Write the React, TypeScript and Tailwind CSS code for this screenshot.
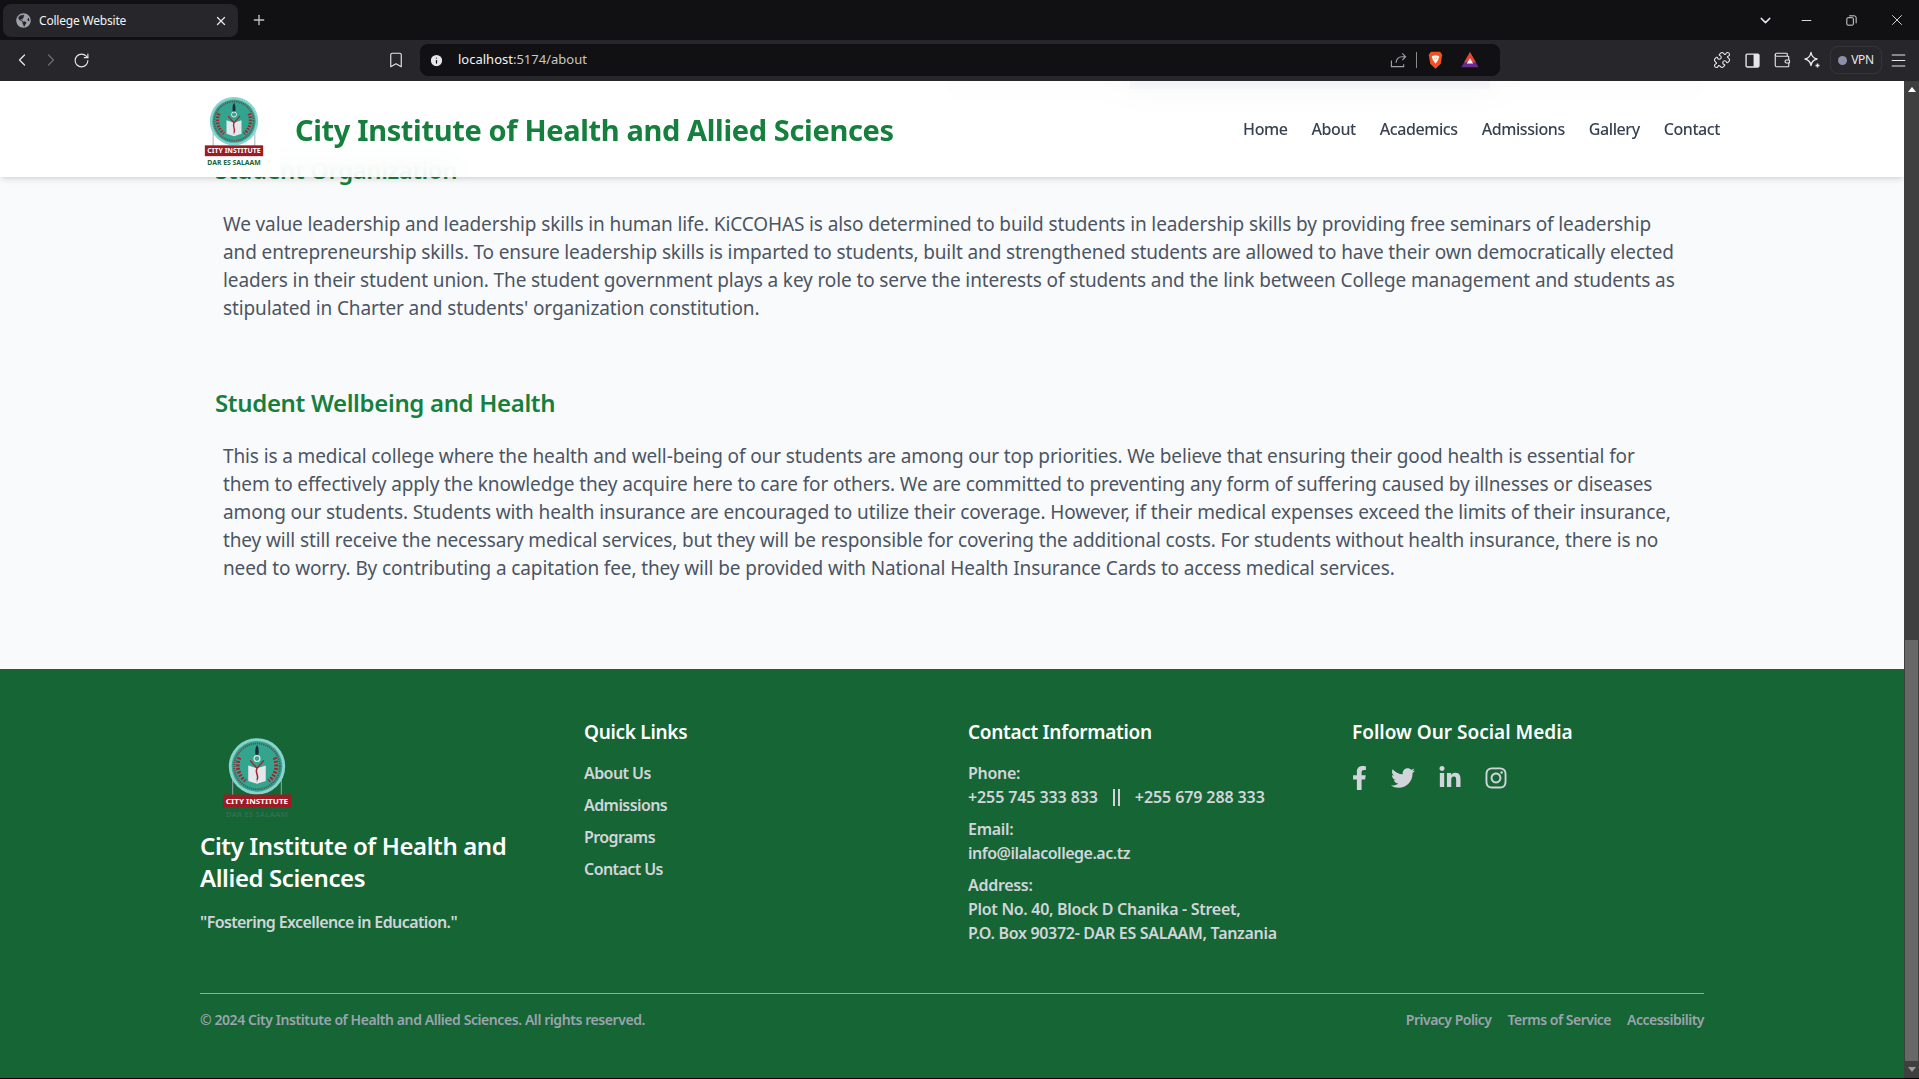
import { ChevronLeft, ChevronRight, RotateCw, Bookmark, Info, Puzzle, Wallet, Menu, X, Plus, ChevronDown, Minus } from "lucide-react";
import { FaFacebookF, FaTwitter, FaLinkedinIn, FaInstagram, FaGlobeAmericas } from "react-icons/fa";

const uiFont = "[font-family:'Noto_Sans',sans-serif]";

function Logo({ dark }: { dark?: boolean }) {
  return (
    <svg viewBox="0 0 72 84" className="w-full h-full">
      <line x1="11" y1="40" x2="11" y2="60" stroke="#9ca3af" strokeWidth="1" />
      <line x1="61" y1="40" x2="61" y2="60" stroke="#9ca3af" strokeWidth="1" />
      <ellipse cx="36" cy="29" rx="29" ry="29" fill="#86d3cf" />
      <ellipse cx="36" cy="29" rx="26" ry="26" fill="#33a58e" />
      <circle cx="36" cy="29" r="23.5" fill="none" stroke="#7a2b35" strokeWidth="2" strokeDasharray="1.2 1" opacity="0.75" />
      <path d="M18 20a20 20 0 0 0 6 24M54 20a20 20 0 0 1-6 24" fill="none" stroke="#a3232f" strokeWidth="4" strokeDasharray="2 1.6" />
      <path d="M27 28l9 3 9-3v16l-9 3-9-3z" fill="#e5e7eb" />
      <path d="M36 31v14" stroke="#9ca3af" strokeWidth="1" />
      <path d="M29 23l7 8 7-8M36 31c-3 5 3 7 0 12" stroke="#a3232f" strokeWidth="1.4" fill="none" />
      <circle cx="36" cy="21" r="3" fill="none" stroke="#e5e7eb" strokeWidth="1.2" />
      <path d="M36 7c-2 3-2 6-1.5 10h3c.5-4 .5-7-1.5-10z" fill="#1f2937" />
      <rect x="1" y="58" width="70" height="13" fill="#9b1c25" />
      <text x="36" y="67.5" textAnchor="middle" fontSize="8" fontWeight="700" fill="#fff" fontFamily="'Noto Sans',sans-serif" textLength="64" lengthAdjust="spacingAndGlyphs">CITY INSTITUTE</text>
      <text x="36" y="81.5" textAnchor="middle" fontSize="8" fontWeight="700" fill={dark ? "#2d6e4f" : "#166534"} fontFamily="'Noto Sans',sans-serif" textLength="64" lengthAdjust="spacingAndGlyphs">DAR ES SALAAM</text>
    </svg>
  );
}

function BraveLion() {
  return (
    <svg viewBox="0 0 20 24" className="w-[15px] h-[20px]">
      <path d="M4 1h12l3 4-2 12-7 6.5L3 17 1 5z" fill="#f4511e" />
      <path d="M5 7l3-1h4l3 1-1.5 5L10 17l-3.5-5z" fill="#fff" />
      <path d="M8 9.5h1M11 9.5h1" stroke="#f4511e" strokeWidth="1" />
    </svg>
  );
}

function BatTriangle() {
  return (
    <svg viewBox="0 0 20 20" className="w-[18px] h-[18px]">
      <path d="M10 1l9.5 17H.5z" fill="#662d91" />
      <path d="M10 1l6.5 11.5h-13z" fill="#e8452c" />
      <path d="M10 8l3.5 6h-7z" fill="#fff" />
    </svg>
  );
}

function Sidebar() {
  return (
    <svg viewBox="0 0 14 14" className="w-[15px] h-[15px] block">
      <rect x="1" y="1" width="12" height="12" rx="1" fill="none" stroke="#e5e7eb" strokeWidth="1.3" />
      <rect x="8" y="1" width="5" height="12" fill="#e5e7eb" />
    </svg>
  );
}

function ShareIcon() {
  return (
    <svg viewBox="0 0 18 18" className="w-[17px] h-[17px] text-[#a1a1aa]" fill="none" stroke="currentColor" strokeWidth="1.2">
      <path d="M1.5 9v6.5h13V13M13 1.5l3.5 3.5-3.5 3.5M16.5 5H13c-4 0-6.5 2.5-6.5 6.5" />
    </svg>
  );
}

function StarIcon() {
  return (
    <svg viewBox="0 0 18 18" className="w-[18px] h-[18px]" fill="none" stroke="currentColor" strokeWidth="1.4">
      <path d="M8 1.5c.6 3.8 2.2 5.6 6 6.5-3.8.9-5.4 2.7-6 6.5-.6-3.800-2.200-5.600-6-6.500 3.800-.9 5.400-2.700 6-6.500z" strokeLinejoin="round" />
      <path d="M14.500 12.500v4M12.500 14.500h4" strokeWidth="1.5" />
    </svg>
  );
}

function Chrome() {
  return (
    <>
      <div className={`h-10 bg-[#111113] flex items-end pl-[3px] text-white ${uiFont}`}>
        <div className="h-[33px] w-[235px] mb-[3px] bg-[#26262b] rounded-lg flex items-center pl-[13px] pr-[10px] gap-[8px]">
          <FaGlobeAmericas size={15} className="text-[#a1a1aa]" />
          <span className="text-[12px] tracking-[-0.2px] flex-1 text-[#f3f4f6]">College Website</span>
          <X size={14} strokeWidth={2.2} className="text-[#e5e7eb]" />
        </div>
        <Plus size={16} className="ml-[13px] mb-[12px] text-[#c4c4c8]" />
        <div className="flex-1" />
        <div className="flex items-center mb-[11px] text-[#e5e7eb]">
          <ChevronDown size={17} />
          <Minus size={15} strokeWidth={1.5} className="ml-[25px]" />
          <svg viewBox="0 0 14 14" className="w-[13px] h-[13px] ml-[31px]"><rect x="2" y="4" width="7" height="8" rx="1" fill="none" stroke="currentColor" /><path d="M4.5 2H10a2 2 0 0 1 2 2v6" fill="none" stroke="currentColor" /></svg>
          <X size={18} strokeWidth={1.2} className="ml-[30px] mr-[13px]" />
        </div>
      </div>
      <div className={`h-[41px] bg-[#26262b] flex items-center text-[#e5e7eb] pb-px ${uiFont}`}>
        <ChevronLeft size={20} strokeWidth={1.5} className="ml-[12px]" />
        <ChevronRight size={20} strokeWidth={1.5} className="ml-[9px] text-[#6b6b70]" />
        <RotateCw size={17} strokeWidth={1.6} className="ml-[12px]" />
        <Bookmark size={18} strokeWidth={1.5} className="ml-[297px]" />
        <div className="ml-[15px] w-[1080px] h-8 rounded-lg bg-[#111113] flex items-center pl-[9px]">
          <Info size={15} fill="#e5e7eb" stroke="#111113" />
          <span className="ml-[14px] text-[13px] flex-1 text-[#f3f4f6]">localhost<span className="text-[#c7c7cc]">:5174/about</span></span>
          <ShareIcon />
          <span className="w-px h-4 bg-[#8a8a8f] ml-[9px] mr-[11px]" />
          <BraveLion />
          <span className="ml-[18px] mr-[21px]"><BatTriangle /></span>
        </div>
        <Puzzle size={18} strokeWidth={1.5} className="ml-[213px]" />
        <span className="ml-[14px]"><Sidebar /></span>
        <Wallet size={18} strokeWidth={1.5} className="ml-[13px]" />
        <span className="ml-[12px]"><StarIcon /></span>
        <div className="ml-[9px] h-7 w-[52px] rounded-lg border border-[#35353a] flex items-center justify-center gap-[4px] text-[12px] tracking-[-0.3px]">
          <span className="w-[9px] h-[9px] rounded-full bg-[#8b8fa8]" />VPN
        </div>
        <Menu size={19} strokeWidth={1.3} className="ml-[7px]" />
      </div>
    </>
  );
}

function Header() {
  const nav = ["Home", "About", "Academics", "Admissions", "Gallery", "Contact"];
  return (
    <header className="absolute top-0 inset-x-0 h-24 z-10 bg-white/90 backdrop-blur-md shadow-md">
      <div className="h-full pr-[184px] flex items-center">
        <div className="w-[280px] h-24 bg-white flex items-center justify-end shrink-0">
          <div className="w-[60px] h-[70px] mr-[16px] mt-[5px]"><Logo /></div>
        </div>
        <h1 className="ml-[15px] text-[29px] leading-9 font-bold text-[#15803d] tracking-[-0.35px] mt-[2px]">City Institute of Health and Allied Sciences</h1>
        <nav className="ml-auto flex gap-6 text-[#374151] text-base font-medium tracking-[-0.42px]">
          {nav.map((n) => <a key={n}>{n}</a>)}
        </nav>
      </div>
    </header>
  );
}

function Content() {
  const para = "pl-2 mr-[11px] text-[19px] leading-7 text-[#4b5563] tracking-[-0.12px]";
  return (
    <main className="bg-[#f9fafb] pl-[215px] pr-[215px] pb-[87px]">
      <div className="flex h-2 ml-[735px] w-[750px] mb-[65px]">
        <div className="w-[180px] bg-gray-300" />
        <div className="w-[360px] bg-gray-600" />
        <div className="w-[210px] bg-gray-300" />
      </div>
      <h2 className="text-2xl font-semibold text-[#15803d] tracking-[-0.45px] mb-6">Student Organization</h2>
      <p className={`${para} mb-[65px]`}>
        We value leadership and leadership skills in human life. KiCCOHAS is also determined to build students in leadership skills by providing free seminars of leadership and entrepreneurship skills. To ensure leadership skills is imparted to students, built and strengthened students are allowed to have their own democratically elected leaders in their student union. The student government plays a key role to serve the interests of students and the link between College management and students as stipulated in Charter and students' organization constitution.
      </p>
      <h2 className="text-2xl leading-[31px] font-semibold text-[#15803d] tracking-[-0.34px] mb-6">Student Wellbeing and Health</h2>
      <p className={para}>
        This is a medical college where the health and well-being of our students are among our top priorities. We believe that ensuring their good health is essential for them to effectively apply the knowledge they acquire here to care for others. We are committed to preventing any form of suffering caused by illnesses or diseases among our students. Students with health insurance are encouraged to utilize their coverage. However, if their medical expenses exceed the limits of their insurance, they will still receive the necessary medical services, but they will be responsible for covering the additional costs. For students without health insurance, there is no need to worry. By contributing a capitation fee, they will be provided with National Health Insurance Cards to access medical services.
      </p>
    </main>
  );
}

function Footer() {
  const body = "text-base font-semibold text-[#d1d5db]";
  const h3 = "text-[19px] leading-7 font-semibold";
  return (
    <footer className="bg-[#166534] text-white">
      <div className="mx-auto w-[1504px] pt-[49px] pb-12">
        <div className="grid grid-cols-4 gap-8 h-[275px]">
          <div>
            <div className="w-[70px] h-[82px] ml-[22px] mb-[10px] mt-[20px]"><Logo dark /></div>
            <h3 className="text-2xl font-semibold tracking-[-0.4px]">City Institute of Health and Allied Sciences</h3>
            <p className={`mt-4 ${body} tracking-[-0.6px]`}>"Fostering Excellence in Education."</p>
          </div>
          <div>
            <h3 className={`${h3} tracking-[-0.3px] mb-[15px]`}>Quick Links</h3>
            <ul className={`space-y-2 ${body} tracking-[-0.58px]`}>
              <li>About Us</li><li>Admissions</li><li>Programs</li><li>Contact Us</li>
            </ul>
          </div>
          <div>
            <h3 className={`${h3} tracking-[-0.3px] mb-[15px]`}>Contact Information</h3>
            <div className={`space-y-2 ${body} tracking-[-0.3px]`}>
              <p>Phone:<br /><span className="inline-flex items-center h-6 leading-6 tracking-[-0.1px]">+255 745 333 833<span className="mx-[15px] w-[7px] h-[17px] border-x-2 border-[#d1d5db]" />+255 679 288 333</span></p>
              <p>Email:<br /><span className="tracking-[-0.5px]">info@ilalacollege.ac.tz</span></p>
              <p>Address:<br />Plot No. 40, Block D Chanika - Street,<br />P.O. Box 90372- DAR ES SALAAM, Tanzania</p>
            </div>
          </div>
          <div>
            <h3 className={`${h3} tracking-[0px] mb-[20px]`}>Follow Our Social Media</h3>
            <div className="flex items-center gap-6 text-[#d1d5db] h-6">
              <FaFacebookF className="w-[15px] h-6" />
              <FaTwitter className="w-6 h-6" />
              <FaLinkedinIn className="w-[22px] h-6" />
              <FaInstagram className="w-[22px] h-6" />
            </div>
          </div>
        </div>
        <div className="border-t border-[#9ca3af] pt-4 flex justify-between text-sm font-semibold text-[#9ca3af] tracking-[-0.42px]">
          <span>© 2024 City Institute of Health and Allied Sciences. All rights reserved.</span>
          <div className="flex gap-4 tracking-[-0.5px]"><a>Privacy Policy</a><a>Terms of Service</a><a>Accessibility</a></div>
        </div>
      </div>
    </footer>
  );
}

function Scrollbar() {
  return (
    <div className="w-[15px] bg-[#3f3f3f] flex flex-col items-center justify-between">
      <div className="mt-[6px] w-0 h-0 border-x-[4px] border-x-transparent border-b-[5px] border-b-white" />
      <div className="flex flex-col items-center w-full">
        <div className="w-[13px] h-[421px] bg-[#686868]" />
        <div className="my-[6px] w-0 h-0 border-x-[4px] border-x-transparent border-t-[5px] border-t-[#9a9a9a]" />
      </div>
    </div>
  );
}

export default function App() {
  return (
    <div className={`h-[1079px] w-full overflow-hidden bg-black flex flex-col pb-px ${uiFont}`}>
      <Chrome />
      <div className="flex-1 min-h-0 flex">
        <div className="relative flex-1 min-w-0 overflow-hidden bg-white">
          <Header />
          <div className="h-full flex flex-col justify-end">
            <Content />
            <Footer />
          </div>
        </div>
        <Scrollbar />
      </div>
    </div>
  );
}
